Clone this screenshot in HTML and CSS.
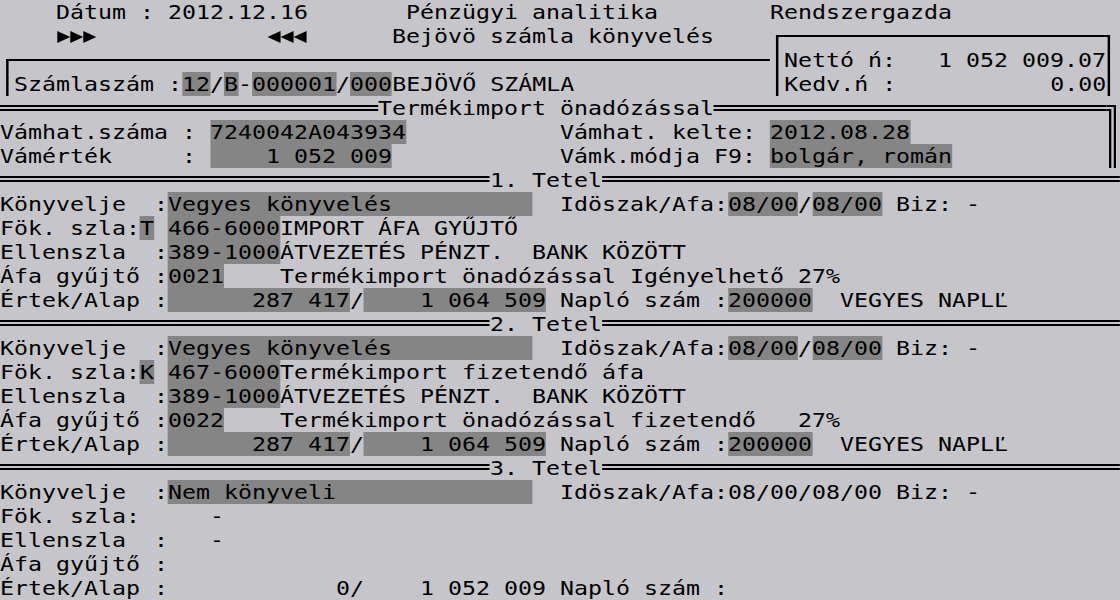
FILE: index.html
```html
<!DOCTYPE html>
<html lang="hu">
<head>
<meta charset="utf-8">
<title>Pénzügyi analitika</title>
<link rel="stylesheet" href="styles.css">
</head>
<body>
<div class="screen">
  <div class="text">
    <div class="row">    Dátum : 2012.12.16       Pénzügyi analitika        Rendszergazda</div>
    <div class="row">    <svg class="tri" viewBox="0 0 42 24" preserveAspectRatio="none" aria-hidden="true"><polygon points="1,7 14,13 1,19"/><polygon points="14,7 27,13 14,19"/><polygon points="27,7 40,13 27,19"/></svg>            <svg class="tri" viewBox="0 0 42 24" preserveAspectRatio="none" aria-hidden="true"><polygon points="15,7 2,13 15,19"/><polygon points="28,7 15,13 28,19"/><polygon points="41,7 28,13 41,19"/></svg>      Bejövö számla könyvelés</div>
    <div class="row">                                                        Nettó ń:   1 052 009.07</div>
    <div class="row"> Számlaszám :<span class="f">12</span>/<span class="f">B</span>-<span class="f">000001</span>/<span class="f">000</span>BEJÖVŐ SZÁMLA               Kedv.ń :           0.00</div>
    <div class="rule rule-top"><span class="line lead-27"></span><span class="label">Termékimport önadózással</span><span class="line fill"></span></div>
    <div class="row">Vámhat.száma : <span class="f">7240042A043934</span>           Vámhat. kelte: <span class="f">2012.08.28</span></div>
    <div class="row">Vámérték     : <span class="f">    1 052 009</span>            Vámk.módja F9: <span class="f">bolgár, román</span></div>
    <div class="rule"><span class="line lead-35"></span><span class="label">1. Tetel</span><span class="line fill"></span></div>
    <div class="row">Könyvelje  :<span class="f">Vegyes könyvelés          </span>  Idöszak/Afa:<span class="f">08/00</span>/<span class="f">08/00</span> Biz: -</div>
    <div class="row">Fök. szla:<span class="f">T</span> <span class="f">466-6000</span>IMPORT ÁFA GYŰJTŐ</div>
    <div class="row">Ellenszla  :<span class="f">389-1000</span>ÁTVEZETÉS PÉNZT.  BANK KÖZÖTT</div>
    <div class="row">Áfa gyűjtő :<span class="f">0021</span>    Termékimport önadózással Igényelhető 27%</div>
    <div class="row">Értek/Alap :<span class="f">      287 417</span>/<span class="f">    1 064 509</span> Napló szám :<span class="f">200000</span>  VEGYES NAPLĽ</div>
    <div class="rule"><span class="line lead-35"></span><span class="label">2. Tetel</span><span class="line fill"></span></div>
    <div class="row">Könyvelje  :<span class="f">Vegyes könyvelés          </span>  Idöszak/Afa:<span class="f">08/00</span>/<span class="f">08/00</span> Biz: -</div>
    <div class="row">Fök. szla:<span class="f">K</span> <span class="f">467-6000</span>Termékimport fizetendő áfa</div>
    <div class="row">Ellenszla  :<span class="f">389-1000</span>ÁTVEZETÉS PÉNZT.  BANK KÖZÖTT</div>
    <div class="row">Áfa gyűjtő :<span class="f">0022</span>    Termékimport önadózással fizetendő   27%</div>
    <div class="row">Értek/Alap :<span class="f">      287 417</span>/<span class="f">    1 064 509</span> Napló szám :<span class="f">200000</span>  VEGYES NAPLĽ</div>
    <div class="rule"><span class="line lead-35"></span><span class="label">3. Tetel</span><span class="line fill"></span></div>
    <div class="row">Könyvelje  :<span class="f">Nem könyveli              </span>  Idöszak/Afa:08/00/08/00 Biz: -</div>
    <div class="row">Fök. szla:     -</div>
    <div class="row">Ellenszla  :   -</div>
    <div class="row">Áfa gyűjtő :</div>
    <div class="row">Értek/Alap :            0/    1 052 009 Napló szám :</div>
  </div>
  <div class="frames">
    <div class="box-invoice"></div>
    <div class="box-sum"></div>
    <div class="corner"></div>
  </div>
</div>
</body>
</html>
```
FILE: styles.css
```css
html, body {
  margin: 0;
  padding: 0;
  background: #c6c5ca;
  width: 1120px;
  height: 600px;
  overflow: hidden;
}

.screen {
  display: grid;
  grid-template-columns: 80ch;
  grid-template-rows: 600px;
  width: 80ch;
  font-family: "DejaVu Sans Mono", monospace;
  font-size: 19px;
  line-height: 24px;
  color: #000;
  transform: scaleX(1.2239);
  transform-origin: 0 0;
}

.text {
  grid-area: 1 / 1;
}

.row {
  height: 24px;
  white-space: pre;
}

.f {
  display: inline-block;
  vertical-align: top;
  height: 24px;
  background: #858585;
  white-space: pre;
}

.tri {
  display: inline-block;
  vertical-align: top;
  width: 3ch;
  height: 24px;
  fill: #000;
}

.rule {
  display: flex;
  height: 24px;
  white-space: pre;
}

.rule-top {
  width: 79ch;
}

.line {
  align-self: flex-start;
  height: 0;
  border-top: 6px double #000;
  margin-top: 8px;
}

.rule-top .line {
  margin-top: 9px;
}

.lead-27 {
  flex: none;
  width: 27ch;
}

.lead-35 {
  flex: none;
  width: 35ch;
}

.fill {
  flex: 1;
}

.label {
  flex: none;
}

.frames {
  grid-area: 1 / 1;
  display: grid;
  grid-template-columns: repeat(80, 1ch);
  grid-template-rows: repeat(25, 24px);
  pointer-events: none;
}

.box-invoice {
  grid-column: 1 / 56;
  grid-row: 3 / 5;
  border-top: 2px solid #000;
  border-left: 2px solid #000;
  margin-top: 11px;
  margin-left: 5px;
}

.box-sum {
  grid-column: 56 / 81;
  grid-row: 2 / 5;
  border: 2px solid #000;
  border-bottom: none;
  margin: 11px 8px 0 5px;
}

.corner {
  grid-column: 80 / 81;
  grid-row: 5 / 8;
  justify-self: start;
  box-sizing: border-box;
  width: calc(0.5ch + 3px);
  border-top: 6px double #000;
  border-right: 6px double #000;
  margin-top: 9px;
}
```
